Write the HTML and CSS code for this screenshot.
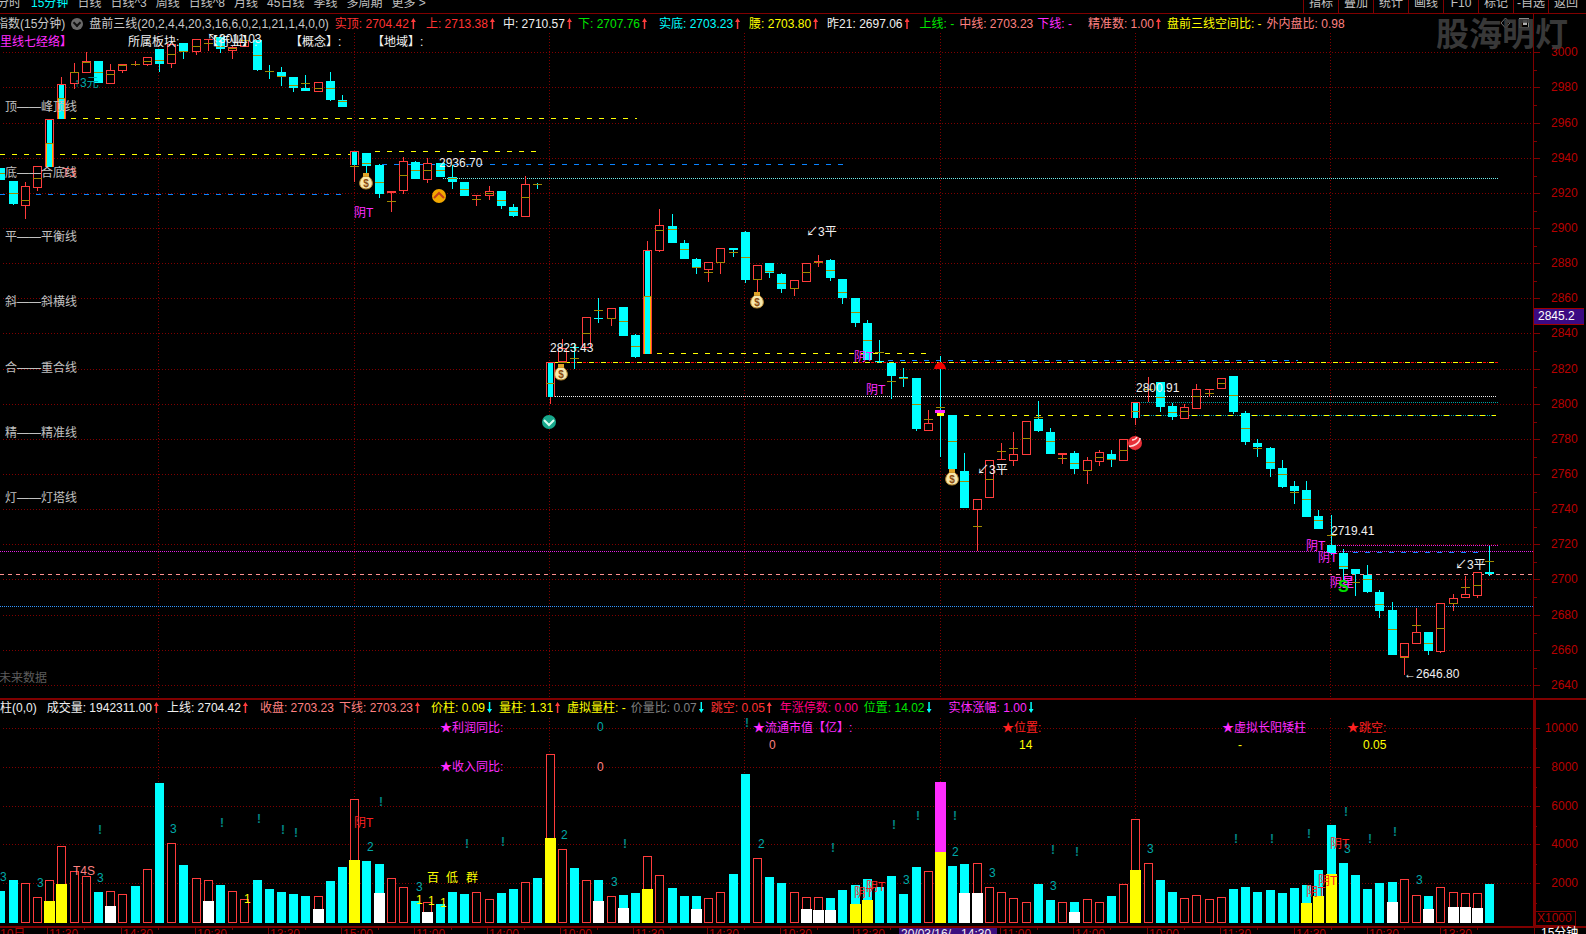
FILE: index.html
```html
<!DOCTYPE html>
<html lang="zh-CN">
<head>
<meta charset="utf-8">
<title>股海明灯</title>
<link rel="stylesheet" href="styles.css">
</head>
<body>
<div class="screen">
  <svg id="canvas" class="canvas" width="1586" height="934" xmlns="http://www.w3.org/2000/svg"></svg>
  <div id="labels" class="labels"></div>

  <header class="toolbar">
    <nav class="tabs">
      <span class="tab">分时</span><span class="tab active">15分钟</span><span class="tab">日线</span><span class="tab">日线^3</span><span class="tab">周线</span><span class="tab">日线^8</span><span class="tab">月线</span><span class="tab">45日线</span><span class="tab">季线</span><span class="tab">多周期</span><span class="tab">更多 &gt;</span>
    </nav>
    <nav class="tools">
      <span class="tool">指标</span><span class="tool">叠加</span><span class="tool">统计</span><span class="tool">画线</span><span class="tool">F10</span><span class="tool">标记</span><span class="tool">-自选</span><span class="tool">返回</span>
    </nav>
  </header>

  <section class="pane price-pane">
    <div class="legend">
      <span class="lg gray first">指数(15分钟)</span>
      <span class="fold"></span>
      <span class="lg gray formula">盘前三线(20,2,4,4,20,3,16,6,0,2,1,21,1,4,0,0)</span>
      <span class="lg red up">实顶: 2704.42</span>
      <span class="lg red up m3">上: 2713.38</span>
      <span class="lg white up m1">中: 2710.57</span>
      <span class="lg green up n1">下: 2707.76</span>
      <span class="lg cyan up m5">实底: 2703.23</span>
      <span class="lg yellow up m2">腰: 2703.80</span>
      <span class="lg white up m2">昨21: 2697.06</span>
      <span class="lg green m3">上线: -</span>
      <span class="lg pink n2">中线: 2703.23</span>
      <span class="lg magenta n3">下线: -</span>
      <span class="lg pink up m9">精准数: 1.00</span>
      <span class="lg yellow n1">盘前三线空间比: -</span>
      <span class="lg pink n2">外内盘比: 0.98</span>
    </div>
    <div class="watermark">股海明灯</div>
    <div class="price-tag">2845.2</div>
  </section>

  <section class="pane volume-pane">
    <div class="legend">
      <span class="lg white first-vol">柱(0,0)</span>
      <span class="lg white up">成交量: 1942311.00</span>
      <span class="lg white up m1">上线: 2704.42</span>
      <span class="lg pink m5">收盘: 2703.23</span>
      <span class="lg pink up n2">下线: 2703.23</span>
      <span class="lg yellow down m4">价柱: 0.09</span>
      <span class="lg yellow up">量柱: 1.31</span>
      <span class="lg yellow">虚拟量柱: -</span>
      <span class="lg dim down n2">价量比: 0.07</span>
      <span class="lg red up">跳空: 0.05</span>
      <span class="lg rose m1">年涨停数: 0.00</span>
      <span class="lg green down n1">位置: 14.02</span>
      <span class="lg magenta down m10">实体涨幅: 1.00</span>
    </div>
    <div class="scale-box">X1000</div>
  </section>

  <footer class="time-axis">
    <div class="time-tag">20/03/16/&nbsp;&nbsp;&nbsp;14:30</div>
    <div class="period">15分钟</div>
  </footer>
</div>
<script src="script.js"></script>
</body>
</html>
```
FILE: styles.css
```css
html, body {
  margin: 0;
  padding: 0;
  background: #000;
  overflow: hidden;
}
.screen {
  position: relative;
  width: 1586px;
  height: 934px;
  overflow: hidden;
  display: grid;
  grid-template-rows: 14px 684px 228px 8px;
  font: 12px/12px "Liberation Sans", "Noto Sans CJK SC", sans-serif;
  color: #c0c0c0;
  white-space: nowrap;
}
.canvas {
  position: absolute;
  inset: 0;
  shape-rendering: crispEdges;
}
.labels {
  position: absolute;
  inset: 0;
}

/* toolbar */
.toolbar {
  position: relative;
  display: flex;
  justify-content: space-between;
  height: 13px;
  overflow: hidden;
  border-bottom: 1px solid #800000;
}
.tabs {
  display: flex;
  gap: 9px;
  margin-left: -3px;
}
.tab {
  line-height: 7px;
}
.active {
  color: #00ffff;
  margin-left: 1px;
}
.tools {
  display: flex;
  margin-right: 3px;
}
.tool {
  width: 34px;
  border-left: 1px solid #800000;
  line-height: 7px;
  text-align: center;
}

/* legends */
.pane {
  position: relative;
}
.legend {
  position: relative;
  display: flex;
  align-items: center;
  gap: 7px;
}
.price-pane .legend {
  height: 19px;
}
.volume-pane .legend {
  height: 17px;
  margin-top: 1px;
}
.first {
  margin-left: -4px;
  margin-right: -1px;
}
.fold {
  width: 12px;
  height: 12px;
  border-radius: 50%;
  background: #6a6a6a;
  margin-right: -1px;
  position: relative;
}
.fold::after {
  content: "";
  position: absolute;
  left: 3px;
  top: 2px;
  width: 4px;
  height: 4px;
  border-right: 2px solid #111;
  border-bottom: 2px solid #111;
  transform: rotate(45deg);
}
.formula {
  margin-right: -1px;
}
.first-vol {
  margin-right: 3px;
}
.lg {
  display: inline-flex;
  align-items: center;
}
.up::after, .down::after {
  content: "";
  width: 5px;
  height: 11px;
  margin-left: 2px;
  background: #ff3c3c;
  clip-path: polygon(50% 0, 100% 36%, 65% 36%, 65% 100%, 35% 100%, 35% 36%, 0 36%);
}
.down::after {
  background: #00ffff;
  clip-path: polygon(35% 0, 65% 0, 65% 64%, 100% 64%, 50% 100%, 0 64%, 35% 64%);
}
/* small nudges between legend entries */
.m1 { margin-left: 1px; }
.m2 { margin-left: 2px; }
.m3 { margin-left: 3px; }
.m4 { margin-left: 4px; }
.m5 { margin-left: 5px; }
.m9 { margin-left: 9px; }
.m10 { margin-left: 10px; }
.n1 { margin-left: -1px; }
.n2 { margin-left: -2px; }
.n3 { margin-left: -3px; }
.gray { color: #c8c8c8; }
.white { color: #f0f0f0; }
.red { color: #ff3232; }
.green { color: #00e600; }
.cyan { color: #00ffff; }
.yellow { color: #ffff00; }
.pink { color: #ff8080; }
.magenta { color: #ff2cff; }
.dim { color: #808080; }
.rose { color: #ff0080; }
.teal { color: #00a8a8; }
.redlab { color: #ff2020; }

/* free labels on the chart */
.note {
  position: absolute;
  line-height: 12px;
}
.side { color: #c0c0c0; }
.faded { color: #5c5c5c; }
.mark {
  font-weight: 700;
  color: #008484;
}
.s-big {
  color: #00e000;
  font-size: 16px;
  font-weight: 700;
}
.axis-price {
  position: absolute;
  left: 1551px;
  color: #b80000;
  line-height: 12px;
}
.axis-vol {
  position: absolute;
  right: 8px;
  color: #b80000;
  line-height: 12px;
}
.axis-time {
  position: absolute;
  color: #b00000;
  line-height: 12px;
  top: 928px;
}

/* over the chart */
.watermark {
  position: absolute;
  left: 1436px;
  top: -1px;
  font-size: 33px;
  line-height: 44px;
  font-weight: 700;
  color: rgba(62, 62, 62, 0.92);
}
.price-tag {
  position: absolute;
  left: 1534px;
  top: 294px;
  width: 46px;
  height: 15px;
  padding-left: 4px;
  line-height: 15px;
  background: #3c0a82;
  border-top: 1px solid #a00000;
  border-bottom: 1px solid #a00000;
  color: #fff;
}
.scale-box {
  position: absolute;
  left: 1534px;
  top: 213px;
  width: 38px;
  height: 13px;
  padding-left: 2px;
  line-height: 13px;
  border: 1px solid #800000;
  color: #b00000;
}

/* time axis */
.time-axis {
  position: relative;
}
.time-tag {
  position: absolute;
  left: 899px;
  top: 2px;
  width: 98px;
  height: 12px;
  padding-left: 2px;
  box-sizing: border-box;
  background: #3c0f80;
  color: #f0f0f0;
  line-height: 12px;
}
.period {
  position: absolute;
  left: 1534px;
  top: 1px;
  width: 52px;
  padding-left: 6px;
  box-sizing: border-box;
  border-left: 1px solid #800000;
  color: #fff;
  line-height: 12px;
}

/* svg paint */
.grid { stroke: #800000; stroke-dasharray: 1 2; }
.axis { stroke: #800000; }
.axis2 { stroke: #800000; stroke-width: 2; }
.ydash { stroke: #ffff00; stroke-dasharray: 5 7; }
.bdash { stroke: #0a84ff; stroke-dasharray: 5 7; }
.rdot { stroke: #ff0000; stroke-dasharray: 3 1 1 1; }
.cdot { stroke: #70f0f0; stroke-dasharray: 1 1; }
.tdot { stroke: #00a0a0; stroke-dasharray: 1 1; }
.wdot { stroke: #f0f0f0; stroke-dasharray: 1 1; }
.mdot { stroke: #e020e0; stroke-dasharray: 1 1; }
.bdot { stroke: #2f96ff; stroke-dasharray: 1 1; }
.pdash { stroke: #ff9090; stroke-dasharray: 4 4; }
.fc { fill: #00ffff; }
.fr { fill: #ff3c3c; }
.fm { fill: #a08a00; }
.fy { fill: #ffb000; }
.fv { fill: #ffff00; }
.fw { fill: #ffffff; }
.fp { fill: #ff2cff; }
.fb { fill: #000000; }
.hollow { fill: #000; stroke: #ff3c3c; }
.smooth { shape-rendering: auto; }
.bag { fill: #f8e8ac; stroke: #b8862c; }
.bag-tie { fill: #e0a428; }
.bag-s {
  fill: #8a4a10;
  font: 700 10px "Liberation Sans", sans-serif;
  text-anchor: middle;
}
.ball-o { fill: #f2a800; }
.ball-t { fill: #18a88c; }
.ball-r { fill: #e62e36; }
.chev { fill: none; stroke-width: 2; }
.chev-o { stroke: #c2401a; }
.chev-t { stroke: #d8fff0; }
.swirl { fill: none; stroke: #ffd8d8; stroke-width: 1.6; }
.dome { fill: #f00000; }
.win { fill: none; stroke: #8a8a8a; }
.winb { fill: #b0b0b0; }
.diamond { fill: none; stroke: #707070; }
```
FILE: script.js
```js
// Candles: [type, bodyTop, bodyBottom, wickTop, wickBottom, midTick]
// type c = falling (solid cyan), r = rising (hollow red), f = framed limit candle
var K = [
['c',168,180,168,180,173],['c',181,204,181,205,193],['r',186,206,182,219,200],['r',166,188,166,191,178],
['f',119,167,119,167,143],['f',84,119,77,119,98],['r',72,84,63,89,72],['r',61,73,52,73,62],
['c',61,83,61,83,72],['r',70,84,64,84,74],['r',64,71,64,73,65],['r',64,65,61,66,64],
['r',57,65,57,66,61],['c',49,64,49,72,60],['r',44,64,44,68,54],['c',43,52,43,59,51],
['r',39,52,39,55,46],['r',39,40,39,51,43],['c',37,49,37,53,46],['r',47,51,46,59,48],
['r',40,47,40,47,40],['c',40,70,40,71,55],['c',71,72,65,79,71],['c',72,77,67,86,76],
['c',77,88,77,92,85],['c',88,91,75,91,83],['r',82,92,82,92,88],['c',81,100,72,101,88],
['c',100,107,95,107,101],['f',151,165,151,182,166],['c',153,166,153,173,163],['c',165,194,164,198,182],
['r',191,193,191,212,201],['r',161,191,157,194,175],['c',162,179,161,179,170],['r',163,180,158,183,170],
['c',163,177,163,177,170],['c',177,182,165,189,178],['c',182,196,182,196,189],['r',195,196,195,206,199],
['r',191,196,186,200,193],['c',191,206,191,209,200],['c',207,216,204,217,211],['r',184,217,176,217,197],
['c',184,185,183,189,184],['f',362,397,362,404,383],['r',348,362,339,362,362],['c',347,348,343,369,358],
['r',317,348,317,348,333],['c',318,319,298,323,310],['r',308,319,308,326,318],['c',307,336,307,336,321],
['c',335,357,334,358,346],['f',250,354,241,354,296],['r',225,251,209,252,230],['c',226,243,214,243,229],
['c',243,259,240,259,249],['c',259,268,258,274,267],['r',262,270,262,282,272],['r',248,263,248,274,262],
['c',248,250,248,257,252],['c',232,280,231,283,257],['r',265,280,265,292,279],['c',263,273,263,278,271],
['c',274,289,273,293,283],['r',280,289,280,296,288],['r',263,282,263,282,272],['r',261,263,255,267,262],
['c',260,278,259,281,270],['c',279,298,279,304,292],['c',298,323,298,327,312],['c',323,360,320,360,340],
['c',361,362,340,363,352],['c',363,376,363,399,381],['c',377,378,368,387,378],['c',378,429,378,431,404],
['r',423,431,410,431,419],['c',411,412,356,457,407],['c',415,469,415,469,441],['c',471,508,453,508,481],
['r',499,510,499,551,526],['r',460,498,460,498,479],['r',459,460,443,460,451],['r',454,461,432,466,448],
['r',421,455,421,455,438],['c',419,431,401,432,417],['c',432,454,428,454,441],['r',453,455,453,464,458],
['c',453,469,451,474,463],['r',460,471,457,484,470],['r',452,462,450,466,457],['c',454,460,450,467,459],
['r',439,461,439,461,450],['f',402,418,402,425,411],['r',389,390,377,402,389],['c',382,407,382,412,397],
['c',406,417,403,420,412],['r',407,419,404,419,411],['r',389,409,384,409,396],['r',389,390,389,397,393],
['r',378,389,378,389,383],['c',376,412,376,414,395],['c',413,442,411,445,428],['c',443,447,439,457,448],
['c',448,469,447,477,462],['c',468,487,460,488,474],['c',486,491,481,504,492],['c',490,517,481,517,499],
['c',516,529,510,529,520],['c',545,553,515,555,535],['c',553,569,549,580,566],['c',569,574,569,596,582],
['c',575,592,565,593,579],['c',592,611,590,618,604],['c',610,655,602,655,629],['r',643,657,643,675,657],
['r',632,644,608,644,625],['c',632,651,632,655,643],['r',603,652,603,653,628],['r',598,604,594,611,603],
['r',594,598,576,598,587],['r',572,596,572,598,585],['c',572,574,546,576,561]
];

// Volume bars: colour + top, optional overlay colour + top (zoomed y, page y = 690 + v / 3)
var V = ('c603 c570 r580 r622 r571y633 r469y582 r544 r559 c606 r604w648 r613 c588 r538 c279 r460 c525 r565 r571w633 c585 r604 ' +
 'r628 c570 c597 c606 c612 c618 r619w657 c573 c531 r328y510 c513 c522w609 r565 r592 c633 r637w666 c642 c606 c612 r607 r628 c609 c597 r577 ' +
 'c564 r192y444 r478 c534 r571 c570w633 r619 c615w654 c609 r499y597 r556 c594 c618 c618w657 r625 r607 c552 c252 r505 c561 c579 r607 ' +
 'r622w657 r622w660 c624w660 c600 c585y642 c567y630 c591 c558 c612 c531 r544 p276y486 c528 c522w609 r520w609 r592 r607 r625 r637 c582 c630 ' +
 'r637 c636w666 r628 r637 c618 r583 r388y540 r520 c570 c606 r625 r616 r628 r622 c597 c591 c606 c600 c609 c594 c585y639 c540y618 c405y552 ' +
 'c519 c555 c597 c579 c576w636 r568 r616 c618w657 r592 r607w651 r610w651 r610w654 c582').split(' ');

function x(i) { return Math.round(0.3 + 12.205 * i); }
var out = [];
function rect(a, b, w, h, c) { out.push('<rect x="' + a + '" y="' + b + '" width="' + w + '" height="' + h + '" class="' + c + '"/>'); }
function line(a, b, c, d, k) { out.push('<line x1="' + a + '" y1="' + b + '" x2="' + c + '" y2="' + d + '" class="' + k + '"/>'); }

// grid
var priceY = [], n;
for (n = 0; n <= 18; n++) priceY.push(Math.round(52.3 + 35.14 * n));
var volY = [728, 767, 806, 844, 883];
priceY.concat(volY).forEach(function (y) { line(3, y + 0.5, 1540, y + 0.5, 'grid'); });
[158, 354, 549, 744, 940, 1135, 1330].forEach(function (g) {
  line(g + 0.5, 33, g + 0.5, 698, 'grid');
  line(g + 0.5, 718, g + 0.5, 923, 'grid');
});

// study lines
[
 [118, 71, 637, 'ydash'], [154, 0, 350, 'ydash'], [151, 375, 540, 'ydash'],
 [194, 0, 345, 'bdash'], [164, 382, 845, 'bdash'], [178, 443, 1499, 'cdot'],
 [353, 657, 932, 'ydash'], [362, 553, 1499, 'rdot'], [362, 553, 1499, 'ydash'], [360, 888, 1298, 'bdash'],
 [396, 553, 1496, 'wdot'], [402, 1135, 1499, 'tdot'], [415, 1135, 1496, 'tdot'], [415, 952, 1496, 'ydash'],
 [551, 0, 1533, 'mdot'], [545, 1331, 1499, 'mdot'], [552, 1353, 1478, 'bdash'],
 [574, 0, 1533, 'pdash'], [606, 0, 1533, 'bdot']
].forEach(function (l) { line(l[1], l[0] + 0.5, l[2], l[0] + 0.5, l[3]); });

// axes
line(1533.5, 14, 1533.5, 926, 'axis');
line(0, 13.5, 1586, 13.5, 'axis');
line(0, 698.5, 1586, 698.5, 'axis2');
line(0, 926.5, 1586, 926.5, 'axis2');
line(1535, 699, 1535, 926, 'axis2');
priceY.forEach(function (y, i) {
  line(1533, y + 0.5, 1540, y + 0.5, 'axis');
  if (i < 18) line(1533, y + 18.5, 1537, y + 18.5, 'axis');
});
volY.forEach(function (y) {
  line(1533, y + 0.5, 1540, y + 0.5, 'axis');
  line(1533, y + 20.5, 1537, y + 20.5, 'axis');
});

// time ticks
var T = [[47, '11:30'], [121, '14:30'], [195, '10:30'], [268, '13:30'], [341, '15:00'], [414, '11:00'], [487, '14:00'],
 [560, '10:00'], [633, '11:30'], [707, '14:30'], [780, '10:30'], [853, '13:30'], [1000, '11:00'], [1073, '14:00'],
 [1147, '10:00'], [1220, '11:30'], [1294, '14:30'], [1367, '10:30'], [1440, '13:30']];
T.forEach(function (t) {
  line(t[0] + 0.5, 927, t[0] + 0.5, 934, 'axis');
  line(t[0] + 37.5, 927, t[0] + 37.5, 930, 'axis');
});

// volume bars
V.forEach(function (s, i) {
  var m = s.match(/^([crp])(\d+)(?:([yw])(\d+))?$/);
  var top = Math.round(690 + m[2] / 3), X = x(i);
  if (m[1] === 'r') rect(X - 4 + 0.5, top + 0.5, 8, 923 - top - 1, 'hollow');
  else if (m[1] === 'c') rect(X - 4, top, 9, 923 - top, 'fc');
  else rect(X - 5, top, 11, 923 - top, 'fp');
  if (m[3]) {
    var t2 = Math.round(690 + m[4] / 3);
    rect(X - 5, t2, 11, 923 - t2, m[3] === 'y' ? 'fv' : 'fw');
  }
});

// candles
K.forEach(function (k, i) {
  var X = x(i), t = k[1], b = k[2], col = k[0] === 'c' ? 'fc' : 'fr';
  if (k[3] < t) rect(X, k[3], 1, t - k[3], col);
  if (k[4] > b) rect(X, b, 1, k[4] - b, col);
  if (k[0] === 'f') {
    rect(X - 4, t, 9, b - t, 'fr');
    rect(X - 3, t + 1, 7, b - t - 1, 'fb');
    if (i === 4 || i === 5 || i === 53) rect(X - 3, k[5], 7, b - k[5], 'fy');
    rect(X - 2, t + 1, 5, b - t - 1, 'fc');
  } else if (b - t <= 2) {
    rect(X - 4, t, 9, b - t, col);
  } else if (k[0] === 'c') {
    rect(X - 4, t, 9, b - t, 'fc');
  } else {
    rect(X - 3.5, t + 0.5, 8, b - t - 1, 'hollow');
  }
  rect(X - 4, k[5], 9, 1, 'fm');
});

// markers
function bag(a, b) {
  out.push('<g class="smooth" transform="translate(' + a + ' ' + b + ')">' +
    '<path class="bag" d="M-2.5 -4.5 C-8 -1 -8 8 0 8 C8 8 8 -1 2.5 -4.5 Z"/>' +
    '<rect class="bag-tie" x="-3" y="-8" width="6" height="3.5"/>' +
    '<text class="bag-s" x="0" y="6">$</text></g>');
}
bag(366, 181); bag(561, 372); bag(757, 300); bag(952, 477);
out.push('<g class="smooth">' +
  '<circle class="ball-o" cx="439" cy="196" r="7"/><path class="chev chev-o" d="M434 198 L439 193 L444 198"/>' +
  '<circle class="ball-t" cx="549" cy="422" r="7"/><path class="chev chev-t" d="M544 420 L549 425 L554 420"/>' +
  '<circle class="ball-r" cx="1135" cy="443" r="7"/><path class="swirl" d="M1129 446 C1133 447 1140 443 1140 438"/><path class="swirl" d="M1132 440 C1134 440 1136 439 1137 437"/>' +
  '<path class="dome" d="M934 369 C935 364 938 362 940 362 C942 362 945 364 946 369 Z"/>' +
  '<path class="diamond" d="M1505.5 18 L1510 23 L1505.5 28 L1501 23 Z"/>' +
  '</g>');
rect(935, 410, 10, 3, 'fp');
rect(937, 413, 7, 3, 'fv');
rect(1519.5, 18.5, 9, 9, 'win');
rect(1523, 20, 4, 5, 'winb');

document.getElementById('canvas').innerHTML = out.join('');

// real text over the chart: [text, left, centre y, class]
var L = [
 ['里线七经络】', 0, 42, 'magenta'], ['所属板块:', 128, 42, 'white'], ['【行业】:', 206, 42, 'white'], ['↖3011.03', 207, 39, 'white'],
 ['【概念】:', 290, 42, 'white'], ['【地域】:', 372, 42, 'white'], ['↑3元', 74, 83, 'teal'],
 ['顶——峰顶线', 5, 107, 'side'], ['底——合底线', 5, 173, 'side'], ['T3', 62, 173, 'pink'], ['平——平衡线', 5, 237, 'side'],
 ['斜——斜横线', 5, 302, 'side'], ['合——重合线', 5, 368, 'side'], ['精——精准线', 5, 433, 'side'], ['灯——灯塔线', 5, 498, 'side'],
 ['未来数据', -1, 678, 'faded'], ['阴T', 354, 213, 'magenta'], ['2936.70', 439, 163, 'white'], ['↙3平', 806, 232, 'white'],
 ['2823.43', 550, 348, 'white'], ['阴T', 854, 357, 'magenta'], ['阴T', 866, 390, 'magenta'], ['↙3平', 977, 470, 'white'],
 ['2800.91', 1136, 388, 'white'], ['2719.41', 1331, 531, 'white'], ['阴T', 1306, 546, 'magenta'], ['阴T', 1318, 558, 'magenta'],
 ['阴星', 1330, 583, 'magenta'], ['星', 1342, 583, 'magenta'], ['S', 1338, 587, 's-big'], ['↙3平', 1455, 565, 'white'], ['←2646.80', 1404, 674, 'white'],
 ['★利润同比:', 440, 728, 'magenta'], ['★收入同比:', 440, 767, 'magenta'], ['0', 597, 727, 'teal'], ['0', 597, 767, 'pink'],
 ['★流通市值【亿】:', 753, 728, 'magenta'], ['0', 769, 745, 'pink'], ['★位置:', 1002, 728, 'redlab'], ['14', 1019, 745, 'yellow'],
 ['★虚拟长阳矮柱', 1222, 728, 'magenta'], ['-', 1238, 745, 'yellow'], ['★跳空:', 1347, 728, 'redlab'], ['0.05', 1363, 745, 'yellow'],
 ['T4S', 73, 871, 'pink'], ['百', 427, 878, 'yellow'], ['低', 446, 878, 'yellow'], ['群', 466, 878, 'yellow'],
 ['1', 244, 899, 'yellow'], ['1', 416, 900, 'yellow'], ['1', 428, 901, 'yellow'], ['1', 440, 903, 'yellow'],
 ['阴T', 354, 823, 'redlab'], ['阴T', 854, 893, 'redlab'], ['阴T', 866, 887, 'redlab'], ['阴T', 1306, 892, 'redlab'], ['阴T', 1318, 881, 'redlab'], ['阴T', 1330, 844, 'redlab']
];
[[10, 560], [117, 578], [297, 563], [513, 416], [1238, 590]].forEach(function (p) { L.push(['3', p[0] / 2.958 - 3, 690 + p[1] / 3, 'teal']); });
L.push(['2', 1094 / 2.958 - 3, 690 + 470 / 3, 'teal']);
[[102, 434, '2'], [247, 575, '3'], [682, 461, '2'], [1113, 569, '3'], [1258, 485, '2'], [1368, 548, '3'], [1547, 587, '3']].forEach(function (p) { L.push([p[2], 530 + p[0] / 2.958 - 3, 690 + p[1] / 3, 'teal']); });
[[279, 476], [860, 476], [1075, 571]].forEach(function (p) { L.push(['3', 1056 + p[0] / 2.958 - 3, 690 + p[1] / 3, 'teal']); });
[[296, 421], [656, 400], [765, 388], [836, 421], [875, 430], [1126, 337], [1381, 463], [1487, 457]].forEach(function (p) { L.push(['!', p[0] / 2.958 - 2, 690 + p[1] / 3, 'mark']); });
[[641, 100], [280, 463], [895, 475], [1076, 406], [1147, 379], [1256, 379], [1546, 481]].forEach(function (p) { L.push(['!', 530 + p[0] / 2.958 - 2, 690 + p[1] / 3, 'mark']); });
[[62, 487], [532, 448], [638, 448], [748, 433], [857, 367], [928, 448], [1002, 427]].forEach(function (p) { L.push(['!', 1056 + p[0] / 2.958 - 2, 690 + p[1] / 3, 'mark']); });

var box = document.getElementById('labels');
function note(text, cls, left, top) {
  var d = document.createElement('div');
  d.className = cls;
  d.textContent = text;
  if (left !== null) d.style.left = left + 'px';
  if (top !== null) d.style.top = top + 'px';
  box.appendChild(d);
}
L.forEach(function (l) { note(l[0], 'note ' + l[3], Math.round(l[1]), Math.round(l[2] - 6)); });
for (n = 0; n <= 18; n++) note(String(3000 - 20 * n), 'axis-price', null, priceY[n] - 6);
[['10000', 728], ['8000', 767], ['6000', 806], ['4000', 844], ['2000', 883]].forEach(function (a) { note(a[0], 'axis-vol', null, a[1] - 6); });
T.forEach(function (t) { note(t[1], 'axis-time', t[0] + 2, null); });
note('10日', 'axis-time', 0, null);
```
